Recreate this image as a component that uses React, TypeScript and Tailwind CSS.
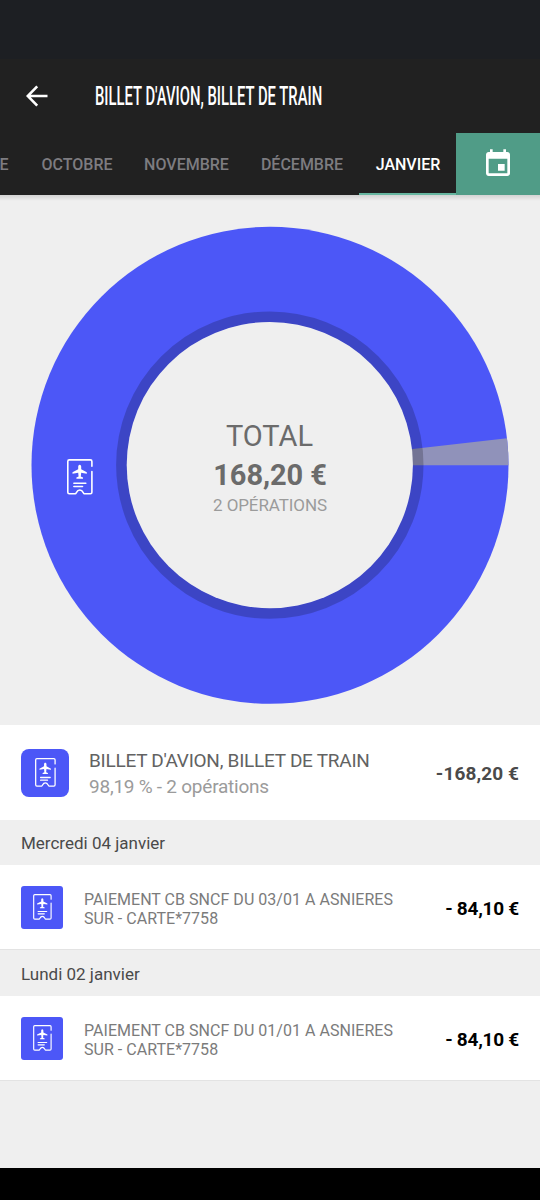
type Operation = {
  label: string[];
  amount: string;
};

type OperationGroup = {
  date: string;
  headerClass: string;
  operations: Operation[];
};

const months = [
  { name: "SEPTEMBRE", className: "w-[126px]" },
  { name: "OCTOBRE", className: "w-[102px]" },
  { name: "NOVEMBRE", className: "w-[117px]" },
  { name: "DÉCEMBRE", className: "w-[114px]" },
];

const groups: OperationGroup[] = [
  {
    date: "Mercredi 04 janvier",
    headerClass: "h-[45px] pt-0.5",
    operations: [
      { label: ["PAIEMENT CB SNCF DU 03/01 A ASNIERES", "SUR - CARTE*7758"], amount: "- 84,10 €" },
    ],
  },
  {
    date: "Lundi 02 janvier",
    headerClass: "h-[46px] pt-[3px]",
    operations: [
      { label: ["PAIEMENT CB SNCF DU 01/01 A ASNIERES", "SUR - CARTE*7758"], amount: "- 84,10 €" },
    ],
  },
];

function TicketIcon({ className }: { className?: string }) {
  return (
    <svg viewBox="0 0 26 36" className={className} fill="none" stroke="white" strokeWidth="1.6" strokeLinecap="round" strokeLinejoin="round">
      <path d="M24.9 7.3V2.4Q24.9 0.9 23.4 0.9H2.3Q0.8 0.9 0.8 2.4V33.3Q0.8 34.8 2.3 34.8H8.3C9.5 34.8 9.4 31 12.8 31S16.1 34.8 17.3 34.8H23.4Q24.9 34.8 24.9 33.3V12.6" />
      <path
        d="M12.7 5.8C11.6 5.8 11.2 6.8 11.2 8V10.3L5.5 13.2V14.7L11.2 13.8L11.6 17.6L9.4 18.6V19.8H16V18.6L13.8 17.6L14.2 13.8L19.8 14.7V13.2L14.2 10.3V8C14.2 6.8 13.8 5.8 12.7 5.8Z"
        fill="white"
        stroke="none"
      />
      <path d="M6.9 24.2H18.8M6.9 27.5H15.5" />
    </svg>
  );
}

function Header() {
  return (
    <header className="flex h-[74px] items-center bg-[#212121] pl-[26px]">
      <svg width="22" height="22" viewBox="0 0 22 22" fill="none" stroke="white" strokeWidth="2.6">
        <path d="M21.5 11H2M11.2 1.3L1.7 11l9.5 9.7" />
      </svg>
      <h1 className="ml-[47px] origin-left scale-x-[0.57] whitespace-nowrap text-[26px] leading-none font-medium text-white">
        BILLET D'AVION, BILLET DE TRAIN
      </h1>
    </header>
  );
}

function MonthTabs() {
  return (
    <nav className="flex h-[62px] bg-[#212121] text-[16px] font-medium">
      <div className="flex w-[456px] justify-end overflow-hidden text-[#7d7c80]">
        {months.map((month) => (
          <div key={month.name} className={`flex shrink-0 items-center justify-center pt-0.5 ${month.className}`}>
            {month.name}
          </div>
        ))}
        <div className="flex w-[97px] shrink-0 items-center justify-center border-b-2 border-[#66b6a0] pt-1 pl-px text-white">
          JANVIER
        </div>
      </div>
      <div className="flex flex-1 items-center justify-center bg-[#509c87]">
        <svg width="32" height="32" viewBox="0 0 24 24" fill="white">
          <path d="M17 12h-5v5h5v-5zM16 1v2H8V1H6v2H5c-1.11 0-1.99.9-1.99 2L3 19c0 1.1.89 2 2 2h14c1.1 0 2-.9 2-2V5c0-1.1-.9-2-2-2h-1V1h-2zm3 18H5V8h14v11z" />
        </svg>
      </div>
    </nav>
  );
}

function SpendingChart() {
  return (
    <section className="relative h-[530px]">
      <div className="absolute inset-x-0 top-0 h-1.5 bg-linear-to-b from-black/12 to-transparent" />
      <svg width="540" height="530" viewBox="0 0 540 530">
        <circle cx="270" cy="270.3" r="238.5" fill="#4c57f7" />
        <path d="M270 270.3H508.5A238.5 238.5 0 0 0 507 243.3Z" fill="#9092ba" />
        <circle cx="269.8" cy="270.1" r="148.2" fill="none" stroke="black" strokeOpacity="0.2" strokeWidth="11" />
        <circle cx="269.8" cy="270.1" r="143.1" fill="#efefef" />
      </svg>
      <TicketIcon className="absolute top-[263.5px] left-[66.5px] h-9 w-[26px]" />
      <div className="absolute inset-x-0 top-[223px] flex flex-col items-center">
        <p className="pr-px text-[29px] leading-9 text-[#6b6b6b]">TOTAL</p>
        <p className="pt-px text-[29px] leading-10 font-bold tracking-[-0.1px] text-[#6b6b6b]">168,20 €</p>
        <p className="text-[17px] leading-5 tracking-[-0.1px] text-[#9b9b9b]">2 OPÉRATIONS</p>
      </div>
    </section>
  );
}

export default function App() {
  return (
    <div className="flex h-[1200px] w-[540px] flex-col overflow-hidden bg-[#efefef] font-['Roboto',sans-serif]">
      <div className="h-[59px] bg-[#1d1f23]" />
      <Header />
      <MonthTabs />
      <SpendingChart />

      <section className="flex h-[95px] items-center bg-white px-[21px]">
        <div className="flex size-12 items-center justify-center rounded-lg bg-[#4c57f7]">
          <TicketIcon className="h-[29px] w-[21px]" />
        </div>
        <div className="ml-5 flex-1 pt-0.5">
          <p className="text-[19px] leading-[26px] tracking-[-0.26px] text-[#626262]">BILLET D'AVION, BILLET DE TRAIN</p>
          <p className="text-[19px] leading-[26px] tracking-[-0.24px] text-[#9b9b9b]">98,19 % - 2 opérations</p>
        </div>
        <p className="pt-[3px] text-[19px] font-bold tracking-[0.1px] text-[#4a4a4a]">-168,20 €</p>
      </section>

      {groups.map((group) => (
        <section key={group.date}>
          <h2 className={`flex items-center px-[21px] text-[17px] text-[#4a4a4a] ${group.headerClass}`}>{group.date}</h2>
          {group.operations.map((operation) => (
            <div key={operation.label[0]} className="flex h-[85px] items-center border-b border-[#e3e3e3] bg-white px-[21px]">
              <div className="flex h-[43px] w-[42px] items-center justify-center rounded-[3px] bg-[#4c57f7]">
                <TicketIcon className="h-[26px] w-[19px]" />
              </div>
              <div className="ml-[21px] flex-1 pt-1 text-[16px] leading-[19.5px] tracking-[0.03px] text-[#7b7b7b]">
                {operation.label.map((line) => (
                  <p key={line}>{line}</p>
                ))}
              </div>
              <p className="pt-1 text-[19px] font-bold tracking-[-0.25px] text-black">{operation.amount}</p>
            </div>
          ))}
        </section>
      ))}

      <div className="mt-auto h-8 bg-black" />
    </div>
  );
}
